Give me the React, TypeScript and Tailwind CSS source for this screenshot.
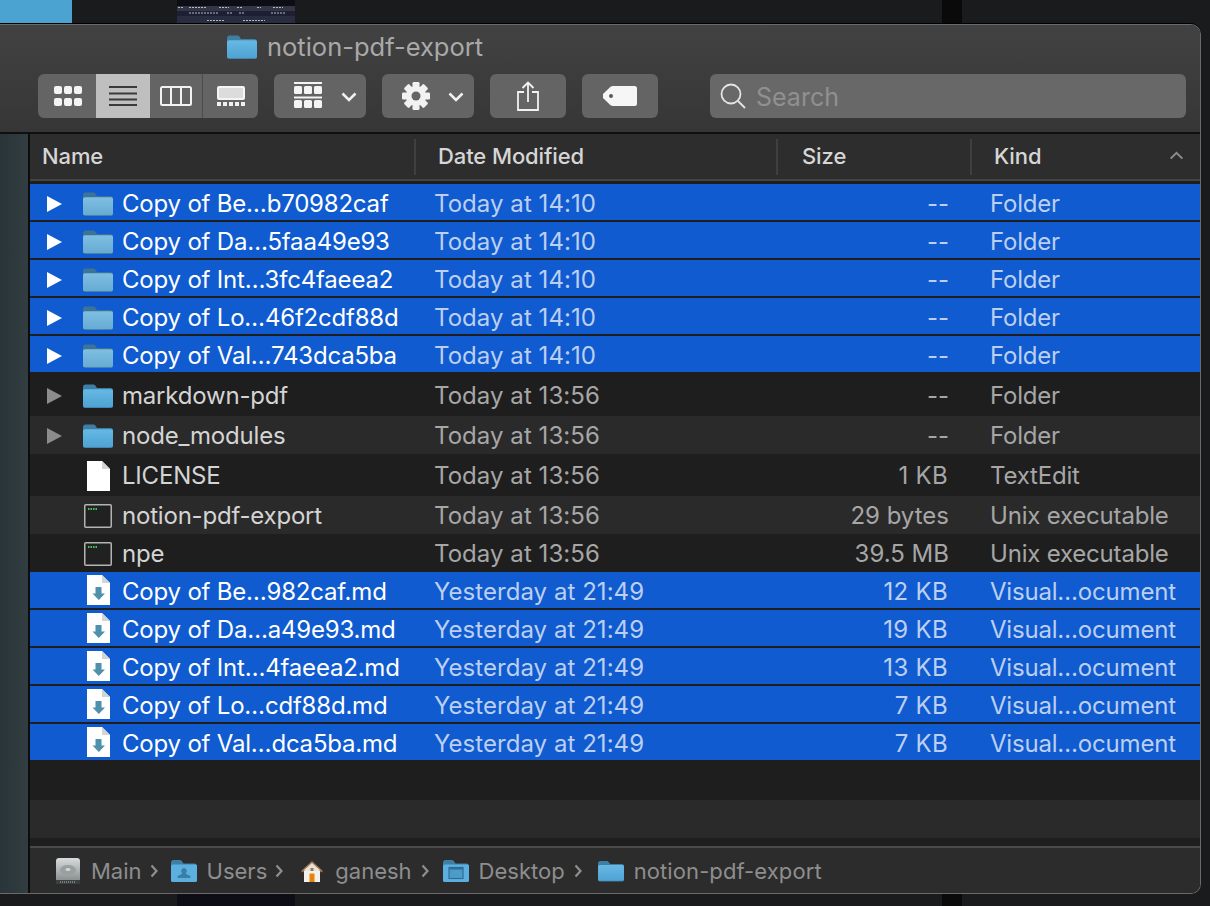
import React from "react";

const FONT = "font-['Inter','Liberation_Sans',sans-serif]";

function Folder({ className = "", pale = false }: { className?: string; pale?: boolean }) {
  const id = pale ? "fp" : "fn";
  return (
    <svg viewBox="0 0 30 24" className={className}>
      <defs>
        <linearGradient id={id} x1="0" y1="0" x2="0" y2="1">
          <stop offset="0" stopColor={pale ? "#7fbfe2" : "#66b9e4"} />
          <stop offset="1" stopColor={pale ? "#66abd4" : "#4fa3d3"} />
        </linearGradient>
      </defs>
      <path d="M0 3.500C0 1.500 1 .5 2.500 .5h7.500c1.500 0 2 .5 3 2l1 1.500h13.500C29 4 30 5 30 6.500V21H0z" fill={pale ? "#3d7396" : "#3f7fa6"} />
      <rect x="0" y="5" width="30" height="19" rx="2" fill={pale ? "#3f7699" : "#3b7ca3"} />
      <rect x="0" y="5.200" width="30" height="18" rx="1.800" fill={`url(#${id})`} />
    </svg>
  );
}

function Doc({ arrow = false, className = "" }: { arrow?: boolean; className?: string }) {
  return (
    <svg viewBox="0 0 23 30" className={className}>
      <path d="M0 0h15l8 8v22H0z" fill="#fff" />
      <path d="M15 0v8h8z" fill="#d4d4d4" />
      {arrow && <path d="M8.500 12h6v6.500h3.500l-6.200 6.500-6.300-6.500h3z" fill="#4f90ab" />}
    </svg>
  );
}

function Exec({ className = "" }: { className?: string }) {
  return (
    <svg viewBox="0 0 28 24" className={className}>
      <rect x=".75" y=".75" width="26.500" height="22.500" rx="1" fill="#212121" stroke="#b4b4b4" strokeWidth="1.500" />
      <path d="M4 5h1.500M6.500 5H8M9 5h1.500M11.500 5H13" stroke="#4fbf5f" strokeWidth="2" />
    </svg>
  );
}

function Triangle({ white }: { white: boolean }) {
  return (
    <svg viewBox="0 0 15 16" className="w-[15px] h-[16px]">
      <path d="M0 0l15 8L0 16z" fill={white ? "#ffffff" : "#8c8c8c"} />
    </svg>
  );
}

function Chevron({ className = "" }: { className?: string }) {
  return (
    <svg viewBox="0 0 16 10" className={className}>
      <path d="M1.500 1.500L8 8l6.500-6.500" fill="none" stroke="#f0f0f0" strokeWidth="2.600" />
    </svg>
  );
}

function Crumb() {
  return (
    <svg viewBox="0 0 8 14" className="w-[8px] h-[14px] shrink-0">
      <path d="M1.500 1.500L6.500 7l-5 5.500" fill="none" stroke="#8f8f8f" strokeWidth="2.200" />
    </svg>
  );
}

function Gear() {
  const teeth = [0, 45, 90, 135, 180, 225, 270, 315];
  return (
    <svg viewBox="0 0 30 30" className="w-[30px] h-[30px]">
      {teeth.map((a) => (
        <rect key={a} x="11.500" y="1" width="7" height="8" rx="1.200" fill="#f2f2f2" transform={`rotate(${a} 15 15)`} />
      ))}
      <circle cx="15" cy="15" r="10" fill="#f2f2f2" />
      <circle cx="15" cy="15" r="4.500" fill="#646464" />
    </svg>
  );
}

type Row = {
  sel: boolean;
  h: string;
  name: string;
  date: string;
  size: string;
  kind: string;
  icon: "folder" | "doc" | "exec" | "md";
  bg: string;
};

const selH = "h-[38px] pb-[2px]";
const rows: Row[] = [
  { sel: true, h: selH, name: "Copy of Be…b70982caf", date: "Today at 14:10", size: "--", kind: "Folder", icon: "folder", bg: "" },
  { sel: true, h: selH, name: "Copy of Da…5faa49e93", date: "Today at 14:10", size: "--", kind: "Folder", icon: "folder", bg: "" },
  { sel: true, h: selH, name: "Copy of Int…3fc4faeea2", date: "Today at 14:10", size: "--", kind: "Folder", icon: "folder", bg: "" },
  { sel: true, h: selH, name: "Copy of Lo…46f2cdf88d", date: "Today at 14:10", size: "--", kind: "Folder", icon: "folder", bg: "" },
  { sel: true, h: selH, name: "Copy of Val…743dca5ba", date: "Today at 14:10", size: "--", kind: "Folder", icon: "folder", bg: "" },
  { sel: false, h: "h-[42px]", name: "markdown-pdf", date: "Today at 13:56", size: "--", kind: "Folder", icon: "folder", bg: "bg-[#1e1e1e]" },
  { sel: false, h: "h-[38px]", name: "node_modules", date: "Today at 13:56", size: "--", kind: "Folder", icon: "folder", bg: "bg-[#2a2a2a]" },
  { sel: false, h: "h-[42px]", name: "LICENSE", date: "Today at 13:56", size: "1 KB", kind: "TextEdit", icon: "doc", bg: "bg-[#1e1e1e]" },
  { sel: false, h: "h-[38px]", name: "notion-pdf-export", date: "Today at 13:56", size: "29 bytes", kind: "Unix executable", icon: "exec", bg: "bg-[#2a2a2a]" },
  { sel: false, h: "h-[38px]", name: "npe", date: "Today at 13:56", size: "39.5 MB", kind: "Unix executable", icon: "exec", bg: "bg-[#1e1e1e]" },
  { sel: true, h: selH, name: "Copy of Be…982caf.md", date: "Yesterday at 21:49", size: "12 KB", kind: "Visual…ocument", icon: "md", bg: "" },
  { sel: true, h: selH, name: "Copy of Da…a49e93.md", date: "Yesterday at 21:49", size: "19 KB", kind: "Visual…ocument", icon: "md", bg: "" },
  { sel: true, h: selH, name: "Copy of Int…4faeea2.md", date: "Yesterday at 21:49", size: "13 KB", kind: "Visual…ocument", icon: "md", bg: "" },
  { sel: true, h: selH, name: "Copy of Lo…cdf88d.md", date: "Yesterday at 21:49", size: "7 KB", kind: "Visual…ocument", icon: "md", bg: "" },
  { sel: true, h: selH, name: "Copy of Val…dca5ba.md", date: "Yesterday at 21:49", size: "7 KB", kind: "Visual…ocument", icon: "md", bg: "" },
];

function FileRow({ r }: { r: Row }) {
  const meta = r.sel ? "text-[#bccff0]" : "text-[#a6a6a6]";
  return (
    <div className={`${r.h} ${r.bg} flex shrink-0`}>
      <div className={`flex-1 flex items-center ${r.sel ? "bg-[#105bd0] pt-[4px]" : "pt-[2px]"}`}>
        <div className="w-[53px] pl-[17px] flex items-center">
          {r.icon === "folder" && <Triangle white={r.sel} />}
        </div>
        <div className="w-[39px] flex justify-start">
          {r.icon === "folder" && <Folder className="w-[30px] h-[24px]" pale={r.sel} />}
          {r.icon === "doc" && <Doc className="w-[23px] h-[30px] ml-[4px]" />}
          {r.icon === "md" && <Doc arrow className="w-[23px] h-[30px] ml-[4px] -mt-[4px]" />}
          {r.icon === "exec" && <Exec className="w-[28px] h-[24px] ml-[1px]" />}
        </div>
        <div className={`w-[312px] whitespace-nowrap tracking-[-0.2px] ${r.sel ? "text-white" : "text-[#d4d4d4]"}`}>{r.name}</div>
        <div className={`w-[310px] whitespace-nowrap tracking-[0.05px] ${meta}`}>{r.date}</div>
        <div className={`w-[205px] text-right whitespace-nowrap ${r.size.endsWith("KB") ? "pr-[1px] tracking-[0.3px]" : ""} ${meta}`}>{r.size}</div>
        <div className={`pl-[41px] whitespace-nowrap tracking-[-0.2px] ${meta}`}>{r.kind}</div>
      </div>
    </div>
  );
}

function Thumb() {
  return (
    <svg viewBox="0 0 118 24" className="w-[118px] h-full block">
      <rect width="118" height="24" fill="#0d0d16" />
      <rect y="6" width="118" height="5" fill="#343646" />
      <rect y="11" width="118" height="5" fill="#1d1f33" />
      <rect y="16" width="118" height="8" fill="#2a2c42" />
      <path d="M1 7.500h5M12 7.500h18M42 7.500h10M60 7.500h6M80 7.500h4M96 7.500h10M12 13h30M50 13h5M62 13h6M94 13h14M30 20.500h18M66 20.500h22" stroke="#b5b8c8" strokeWidth="1" strokeDasharray="2 1" />
    </svg>
  );
}

export default function App() {
  return (
    <div className={`${FONT} w-[1210px] h-[906px] overflow-hidden bg-[#1a1b1c] flex flex-col text-[24px] leading-none`}>
      {/* desktop strip above */}
      <div className="h-[24px] shrink-0 flex">
        <div className="w-[72px] bg-[#4ba3d1]" />
        <div className="w-[105px]" />
        <Thumb />
        <div className="w-[647px]" />
        <div className="w-[20px] bg-[#0a0a0a]" />
      </div>

      {/* window */}
      <div className="w-[1201px] h-[870px] shrink-0 rounded-r-[10px] border-t border-r border-b border-[#6a6a6a] overflow-hidden flex flex-col bg-[#1e1e1e] shadow-[0_-1px_0_#000]">
        {/* toolbar */}
        <div className="h-[109px] shrink-0 bg-gradient-to-b from-[#424242] to-[#363636] border-b-2 border-[#0f0f0f]">
          <div className="h-[49px] pl-[227px] pt-[9px] flex items-start">
            <Folder className="w-[30px] h-[24px] mt-px" />
            <span className="ml-[10px] -mt-px text-[25.500px] leading-[28px] text-[#a9a9a9]">notion-pdf-export</span>
          </div>
          <div className="flex pl-[38px] gap-[16px]">
            <div className="flex h-[44px] w-[220px] rounded-[6px] overflow-hidden bg-[#646464]">
              <div className="w-[58px] flex items-center justify-center pl-[2px]">
                <svg viewBox="0 0 28 20" className="w-[28px] h-[20px]">
                  {[0, 10, 20].map((x) => [0, 12].map((y) => <rect key={`${x}${y}`} x={x} y={y} width="8" height="8" rx="2" fill="#f4f4f4" />))}
                </svg>
              </div>
              <div className="w-[54px] bg-[#bfbfbf] flex items-center justify-center">
                <svg viewBox="0 0 28 20" className="w-[28px] h-[20px]">
                  <path d="M0 1h28M0 7.500h28M0 13.500h28M0 19h28" stroke="#3a3a3a" strokeWidth="2" />
                </svg>
              </div>
              <div className="w-[53px] flex items-center justify-center border-r border-[#4c4c4c]">
                <svg viewBox="0 0 32 20" className="w-[32px] h-[20px]">
                  <rect x="1" y="1" width="30" height="18" rx="1.500" fill="none" stroke="#f2f2f2" strokeWidth="2" />
                  <path d="M11 1v18M21 1v18" stroke="#f2f2f2" strokeWidth="2" />
                </svg>
              </div>
              <div className="flex-1 flex items-center justify-center">
                <svg viewBox="0 0 28 20" className="w-[28px] h-[20px]">
                  <rect x="1" y="1" width="26" height="12" rx="1" fill="#dcdcdc" stroke="#f5f5f5" strokeWidth="2" />
                  {[0, 6, 12, 18, 24].map((x) => <rect key={x} x={x} y="16" width="4" height="4" fill="#f0f0f0" />)}
                </svg>
              </div>
            </div>
            <div className="flex h-[44px] w-[92px] rounded-[6px] bg-[#646464] items-center pl-[20px]">
              <svg viewBox="0 0 28 28" className="w-[28px] h-[28px]">
                <path d="M0 1h28M0 15.500h28" stroke="#f4f4f4" strokeWidth="2" />
                {[0, 10, 20].map((x) => [4, 18].map((y) => <rect key={`${x}${y}`} x={x} y={y} width="8" height="8" rx="1.500" fill="#f4f4f4" />))}
              </svg>
              <Chevron className="w-[16px] h-[10px] ml-[19px] mt-[2px]" />
            </div>
            <div className="flex h-[44px] w-[92px] rounded-[6px] bg-[#646464] items-center pl-[19px]">
              <Gear />
              <Chevron className="w-[16px] h-[10px] ml-[17px] mt-[2px]" />
            </div>
            <div className="flex h-[44px] w-[76px] rounded-[6px] bg-[#646464] items-center justify-center">
              <svg viewBox="0 0 22 30" className="w-[22px] h-[30px]">
                <path d="M7 11H1v18h20V11h-6" fill="none" stroke="#f2f2f2" strokeWidth="1.800" />
                <path d="M11 21V2M5.500 7L11 1.500 16.500 7" fill="none" stroke="#f2f2f2" strokeWidth="1.800" />
              </svg>
            </div>
            <div className="flex h-[44px] w-[76px] rounded-[6px] bg-[#646464] items-center justify-center">
              <svg viewBox="0 0 34 20" className="w-[34px] h-[20px]">
                <path d="M10 0h21.500Q34 0 34 2.500v15Q34 20 31.500 20H10Q8.500 20 7.300 19L0 12Q-1 10 0 8l7.300-7Q8.500 0 10 0z" fill="#f6f6f6" />
                <circle cx="8" cy="10" r="2" fill="#5a5a5a" />
              </svg>
            </div>
            <div className="ml-[36px] flex h-[44px] w-[476px] rounded-[6px] bg-[#686868] items-center pl-[10px]">
              <svg viewBox="0 0 26 26" className="w-[26px] h-[26px]">
                <circle cx="11" cy="11" r="9.500" fill="none" stroke="#e4e4e4" strokeWidth="1.800" />
                <path d="M18 18l7 7" stroke="#e4e4e4" strokeWidth="1.800" />
              </svg>
              <span className="ml-[10px] mt-[2px] text-[#909090] text-[25px]">Search</span>
            </div>
          </div>
        </div>

        <div className="flex flex-1 min-h-0">
          {/* sidebar sliver */}
          <div className="w-[30px] shrink-0 bg-gradient-to-r from-[#2a3539] to-[#323d41] border-r-2 border-[#0c0c0c]" />

          <div className="flex-1 flex flex-col min-w-0">
            {/* header */}
            <div className="h-[47px] shrink-0 bg-[#2d2d2d] border-b-2 border-[#444] flex items-center text-[#d6d6d6] text-[22px] font-medium tracking-[-0.1px]">
              <div className="w-[386px] h-[36px] pl-[12px] pb-[2px] flex items-center border-r-2 border-[#3f3f3f]">Name</div>
              <div className="w-[362px] h-[36px] pl-[22px] pb-[2px] flex items-center border-r-2 border-[#3f3f3f]">Date Modified</div>
              <div className="w-[194px] h-[36px] pl-[24px] pb-[2px] flex items-center border-r-2 border-[#3f3f3f]">Size</div>
              <div className="flex-1 h-[36px] pl-[22px] pr-[16px] pb-[2px] flex items-center justify-between">
                <span>Kind</span>
                <svg viewBox="0 0 16 10" className="w-[15px] h-[9px]">
                  <path d="M1.500 8.500L8 2l6.500 6.500" fill="none" stroke="#8c8c8c" strokeWidth="2.200" />
                </svg>
              </div>
            </div>

            {/* rows */}
            <div className="h-[3px] shrink-0 bg-[#1e1e1e]" />
            {rows.map((r) => <FileRow key={r.name} r={r} />)}
            <div className="h-[38px] shrink-0 bg-[#1e1e1e]" />
            <div className="h-[38px] shrink-0 bg-[#2a2a2a]" />
            <div className="flex-1 bg-[#1e1e1e]" />

            {/* path bar */}
            <div className="h-[47px] shrink-0 bg-[#2c2c2c] border-t-2 border-[#4a4a4a] flex items-center pl-[26px] text-[#8e8e8e] text-[22px] whitespace-nowrap">
              <svg viewBox="0 0 24 26" className="w-[24px] h-[26px] shrink-0">
                <defs>
                  <linearGradient id="hd" x1="0" y1="0" x2="0" y2="1">
                    <stop offset="0" stopColor="#d8dcdc" />
                    <stop offset="1" stopColor="#7d8383" />
                  </linearGradient>
                </defs>
                <rect x="0" y="0" width="24" height="26" rx="3" fill="url(#hd)" />
                <ellipse cx="12" cy="12" rx="8" ry="5" fill="#9aa0a0" />
                <ellipse cx="12" cy="11.500" rx="2.500" ry="1.500" fill="#d4d8d8" />
                <rect x="0" y="22" width="24" height="4" fill="#3c3f3f" />
                <path d="M4 24h16" stroke="#bbb" strokeWidth="1" strokeDasharray="1 1" />
              </svg>
              <span className="ml-[11px]">Main</span>
              <span className="ml-[8px]"><Crumb /></span>
              <svg viewBox="0 0 26 22" className="w-[26px] h-[22px] ml-[13px] shrink-0">
                <path d="M0 3C0 1 1 0 2.500 0h6c1.500 0 2 .5 3 2l1 1.500h11C25 3.500 26 4.500 26 6v14H0z" fill="#3f7fa6" />
                <rect x="0" y="4.500" width="26" height="17.500" rx="1.500" fill="#5bb0df" />
                <path d="M13 8a3 3 0 0 1 2 5c0 1 .5 1.500 3.500 2.500 1 .5 1 2 1 2.500h-13c0-.5 0-2 1-2.500 3-1 3.500-1.500 3.500-2.500a3 3 0 0 1 2-5z" fill="#3a7da6" />
              </svg>
              <span className="ml-[10px]">Users</span>
              <span className="ml-[8px]"><Crumb /></span>
              <svg viewBox="0 0 22 22" className="w-[22px] h-[22px] ml-[18px] shrink-0">
                <path d="M3 10h16v12H3z" fill="#f3f0ea" />
                <path d="M0 11L11 1l11 10-1.500 1.500L11 4l-9.500 8.500z" fill="#9c7650" />
                <path d="M2.500 10.500L11 3l8.500 7.500z" fill="#e6e0d6" />
                <rect x="8.500" y="13.500" width="5" height="8.500" fill="#e8820c" />
                <rect x="9.500" y="8" width="3" height="3" fill="#8e7a60" />
              </svg>
              <span className="ml-[12px]">ganesh</span>
              <span className="ml-[9px]"><Crumb /></span>
              <svg viewBox="0 0 26 22" className="w-[26px] h-[22px] ml-[14px] shrink-0">
                <path d="M0 3C0 1 1 0 2.500 0h6c1.500 0 2 .5 3 2l1 1.500h11C25 3.500 26 4.500 26 6v14H0z" fill="#3f7fa6" />
                <rect x="0" y="4.500" width="26" height="17.500" rx="1.500" fill="#5bb0df" />
                <rect x="6" y="7.500" width="14" height="11" fill="#4b9ccb" stroke="#2f6f96" strokeWidth="1.200" />
                <rect x="6" y="7.500" width="14" height="2" fill="#2f6f96" />
              </svg>
              <span className="ml-[10px]">Desktop</span>
              <span className="ml-[9px]"><Crumb /></span>
              <Folder className="w-[26px] h-[22px] ml-[16px] shrink-0" />
              <span className="ml-[10px] tracking-[0.1px]">notion-pdf-export</span>
            </div>
          </div>
        </div>
      </div>

      {/* desktop strip below */}
      <div className="flex-1 flex">
        <div className="w-[177px]" />
        <div className="w-[118px] bg-[#0d0d16]" />
        <div className="w-[647px]" />
        <div className="w-[20px] bg-[#0a0a0a]" />
      </div>
    </div>
  );
}
